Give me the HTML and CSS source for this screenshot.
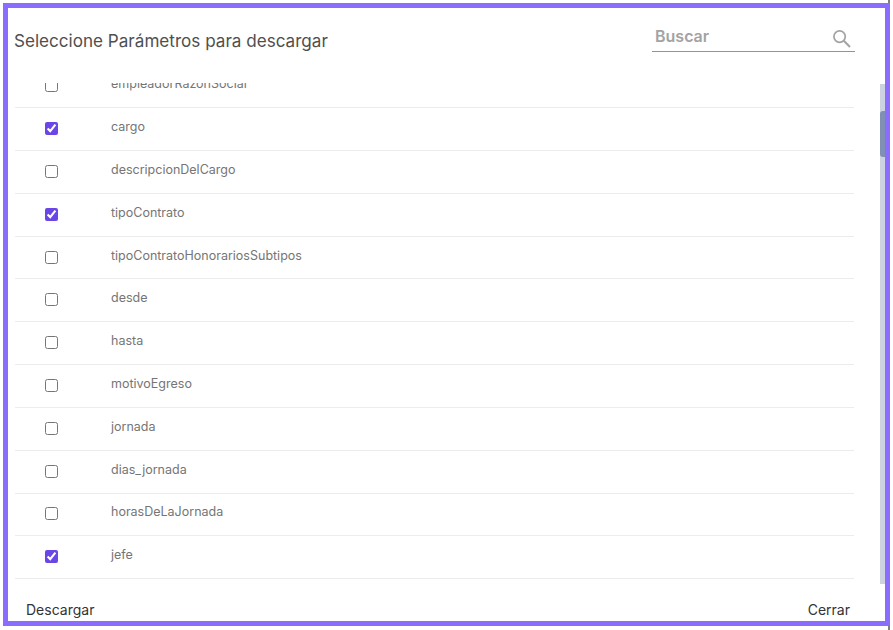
FILE: index.html
```html
<!DOCTYPE html>
<html lang="es">
<head>
<meta charset="utf-8">
<title>Seleccione Parámetros para descargar</title>
<link rel="stylesheet" href="styles.css">
</head>
<body>
<span class="edge edge-top"></span>
<span class="edge edge-bottom"></span>
<div class="modal">
  <header class="head">
    <h2 class="title">Seleccione Parámetros para descargar</h2>
    <div class="search">
      <span class="search-label">Buscar</span>
      <svg class="search-icon" width="20" height="20" viewBox="0 0 20 20" fill="none" stroke="#a3a3a3" aria-hidden="true">
        <circle cx="7.6" cy="7.6" r="5.7" stroke-width="1.7"/>
        <path d="M11.8 11.8 18 18" stroke-width="2"/>
      </svg>
    </div>
  </header>
  <div class="body">
    <div class="list">
      <ul class="rows">
        <li class="row"><input type="checkbox"><span>empleadorRazonSocial</span></li>
        <li class="row"><input type="checkbox" checked><span>cargo</span></li>
        <li class="row"><input type="checkbox"><span>descripcionDelCargo</span></li>
        <li class="row"><input type="checkbox" checked><span>tipoContrato</span></li>
        <li class="row"><input type="checkbox"><span>tipoContratoHonorariosSubtipos</span></li>
        <li class="row"><input type="checkbox"><span>desde</span></li>
        <li class="row"><input type="checkbox"><span>hasta</span></li>
        <li class="row"><input type="checkbox"><span>motivoEgreso</span></li>
        <li class="row"><input type="checkbox"><span>jornada</span></li>
        <li class="row"><input type="checkbox"><span>dias_jornada</span></li>
        <li class="row"><input type="checkbox"><span>horasDeLaJornada</span></li>
        <li class="row"><input type="checkbox" checked><span>jefe</span></li>
      </ul>
    </div>
    <div class="scrollbar"><div class="thumb"></div></div>
  </div>
  <footer class="foot">
    <button class="action" type="button">Descargar</button>
    <button class="action" type="button">Cerrar</button>
  </footer>
</div>
</body>
</html>
```
FILE: styles.css
```css
* { box-sizing: border-box; }
html, body { margin: 0; height: 100%; background: #fff; overflow: hidden; }
body { padding: 3px; font-family: Inter, "Liberation Sans", sans-serif; position: relative; }

.edge { position: absolute; left: 888px; width: 2px; background: #7f7f7f; }
.edge-top { top: 0; height: 3px; }
.edge-bottom { top: 626px; height: 4px; }

.modal {
  width: 887px;
  height: 623px;
  border: 5px solid #8a6cff;
  background: #fff;
  display: flex;
  flex-direction: column;
  overflow: hidden;
}

.head {
  height: 75px;
  flex: none;
  display: flex;
  justify-content: space-between;
  padding: 16px 30px 0 6px;
}
.title {
  margin: 7px 0 0;
  font-size: 17.1px;
  line-height: 19px;
  font-weight: 400;
  color: #4f4f4f;
}
.search {
  width: 203px;
  height: 28px;
  padding: 0 3px;
  border-bottom: 1px solid #949494;
  display: flex;
  justify-content: space-between;
  align-items: flex-start;
}
.search-label {
  margin-top: 3px;
  font-size: 16px;
  line-height: 18px;
  font-weight: 600;
  color: #a3a3a3;
}
.search-icon { margin: 5px 0 0; }

.body {
  flex: none;
  height: 501px;
  display: flex;
  justify-content: space-between;
  padding-left: 7px;
}
.list { width: 839px; height: 498px; overflow: hidden; }
.rows { list-style: none; margin: -17.73px 0 0; padding: 0; }
.row {
  height: 42.83px;
  padding-bottom: 1px;
  border-bottom: 1px solid #ececec;
  display: flex;
  align-items: center;
  font-size: 12.5px;
  color: #757575;
}
.row input {
  width: 13px;
  height: 13px;
  margin: 0 53px 0 30px;
  flex: none;
  accent-color: #6b46e6;
}
.row span { position: relative; top: -2px; }

.scrollbar { width: 5px; height: 500px; margin-top: 1px; background: #ccd2e0; }
.thumb { width: 5px; height: 46px; margin-top: 27px; background: #8090b5; border-radius: 3px 0 0 3px; }

.foot {
  flex: 1;
  display: flex;
  justify-content: space-between;
  padding: 15px 35px 0 18px;
}
.action {
  padding: 0;
  border: 0;
  background: none;
  font: 400 14px/18px Inter, "Liberation Sans", sans-serif;
  color: #333;
}
```
